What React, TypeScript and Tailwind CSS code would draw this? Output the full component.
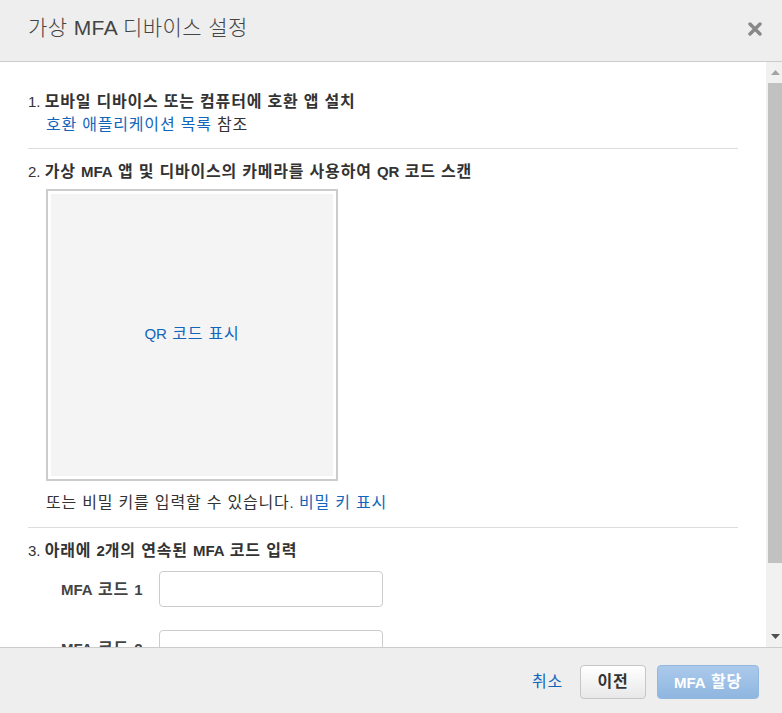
import React from "react";

const Blue = "text-[#1166bb]";

function L({ children }: { children: React.ReactNode }) {
  return <span className="text-[15px] tracking-normal leading-[1]">{children}</span>;
}

function Heading({ n, children }: { n: string; children: React.ReactNode }) {
  return (
    <div className="leading-[23px] h-[23px] text-[#333]">
      <L>{n} </L>
      <span className="font-bold">{children}</span>
    </div>
  );
}

function CodeRow({ n }: { n: string }) {
  return (
    <div className="flex items-center pl-[33px]">
      <div className="w-[98px] font-bold text-[#444] leading-[23px]">
        <L>MFA</L> 코드 <L>{n}</L>
      </div>
      <div className="w-[224px] h-[36px] border border-[#cccccc] rounded-[4px] bg-white" />
    </div>
  );
}

export default function App() {
  return (
    <div className="w-[782px] h-[713px] flex flex-col bg-white font-['Liberation_Sans','Noto_Sans_CJK_KR',sans-serif] text-[16px] tracking-[0.8px] overflow-hidden">
      {/* Header */}
      <div className="h-[62px] shrink-0 bg-[#eeeeee] border-b border-[#cccccc] flex items-center justify-between pl-[28px] pr-[20px]">
        <div className="text-[21px] tracking-[0.4px] font-light text-[#444] leading-none -mt-[7px]">
          가상 MFA 디바이스 설정
        </div>
        <svg width="14" height="14" viewBox="0 0 14 14" className="-mt-[3px]">
          <path d="M2 2 L12 12 M12 2 L2 12" stroke="#888" strokeWidth="3.4" strokeLinecap="round" />
        </svg>
      </div>

      {/* Body */}
      <div className="flex-1 min-h-0 flex">
        <div className="flex-1 overflow-hidden px-[28px] pt-[28px]">
          {/* Section 1 */}
          <div className="pb-[12px] border-b border-[#dddddd]">
            <Heading n="1.">모바일 디바이스 또는 컴퓨터에 호환 앱 설치</Heading>
            <div className="pl-[18px] leading-[23px] h-[23px] text-[#333]">
              <span className={Blue}>호환 애플리케이션 목록</span> 참조
            </div>
          </div>

          {/* Section 2 */}
          <div className="pt-[11px] pb-[13px] border-b border-[#dddddd]">
            <Heading n="2.">
              가상 <L>MFA</L> 앱 및 디바이스의 카메라를 사용하여 <L>QR</L> 코드 스캔
            </Heading>
            <div className="ml-[18px] mt-[6px] w-[292px] h-[292px] border-2 border-[#cccccc] p-[3px] bg-white">
              <div className="w-full h-full bg-[#f4f4f4] flex items-center justify-center">
                <span className={`${Blue} -mt-[3px]`}>
                  <L>QR</L> 코드 표시
                </span>
              </div>
            </div>
            <div className="pl-[18px] mt-[10px] leading-[23px] h-[23px] text-[#333]">
              또는 비밀 키를 입력할 수 있습니다<L>.</L> <span className={Blue}>비밀 키 표시</span>
            </div>
          </div>

          {/* Section 3 */}
          <div className="pt-[11px]">
            <Heading n="3.">
              아래에 <L>2</L>개의 연속된 <L>MFA</L> 코드 입력
            </Heading>
            <div className="mt-[9px] flex flex-col gap-[23px]">
              <CodeRow n="1" />
              <CodeRow n="2" />
            </div>
          </div>
        </div>

        {/* Scrollbar */}
        <div className="w-[16px] shrink-0 bg-[#f1f1f1] flex flex-col">
          <div className="h-[21px] flex items-center justify-center pl-[2px]">
            <svg width="9" height="5" viewBox="0 0 9 5">
              <path d="M0 5 L4.5 0 L9 5 Z" fill="#a3a3a3" />
            </svg>
          </div>
          <div className="ml-[2px] h-[480px] bg-[#c1c1c1]" />
          <div className="flex-1" />
          <div className="h-[21px] flex items-center justify-center pl-[2px]">
            <svg width="9" height="5" viewBox="0 0 9 5">
              <path d="M0 0 L9 0 L4.5 5 Z" fill="#505050" />
            </svg>
          </div>
        </div>
      </div>

      {/* Footer */}
      <div className="h-[66px] shrink-0 bg-[#eeeeee] border-t border-[#cccccc] flex items-start justify-end pt-[17px] pr-[23px]">
        <div className={`h-[34px] flex items-center ${Blue} mr-[17px]`}>취소</div>
        <div className="h-[34px] w-[66px] flex items-center justify-center rounded-[4px] border border-[#c6c6c6] bg-gradient-to-b from-[#ffffff] to-[#e8e8e8] font-bold text-[#333]">
          이전
        </div>
        <div className="ml-[11px] h-[34px] w-[102px] flex items-center justify-center rounded-[4px] border border-[#93b8df] bg-gradient-to-b from-[#abcaeb] to-[#8fb6e0] font-bold text-white">
          <L>MFA</L>&nbsp;할당
        </div>
      </div>
    </div>
  );
}
